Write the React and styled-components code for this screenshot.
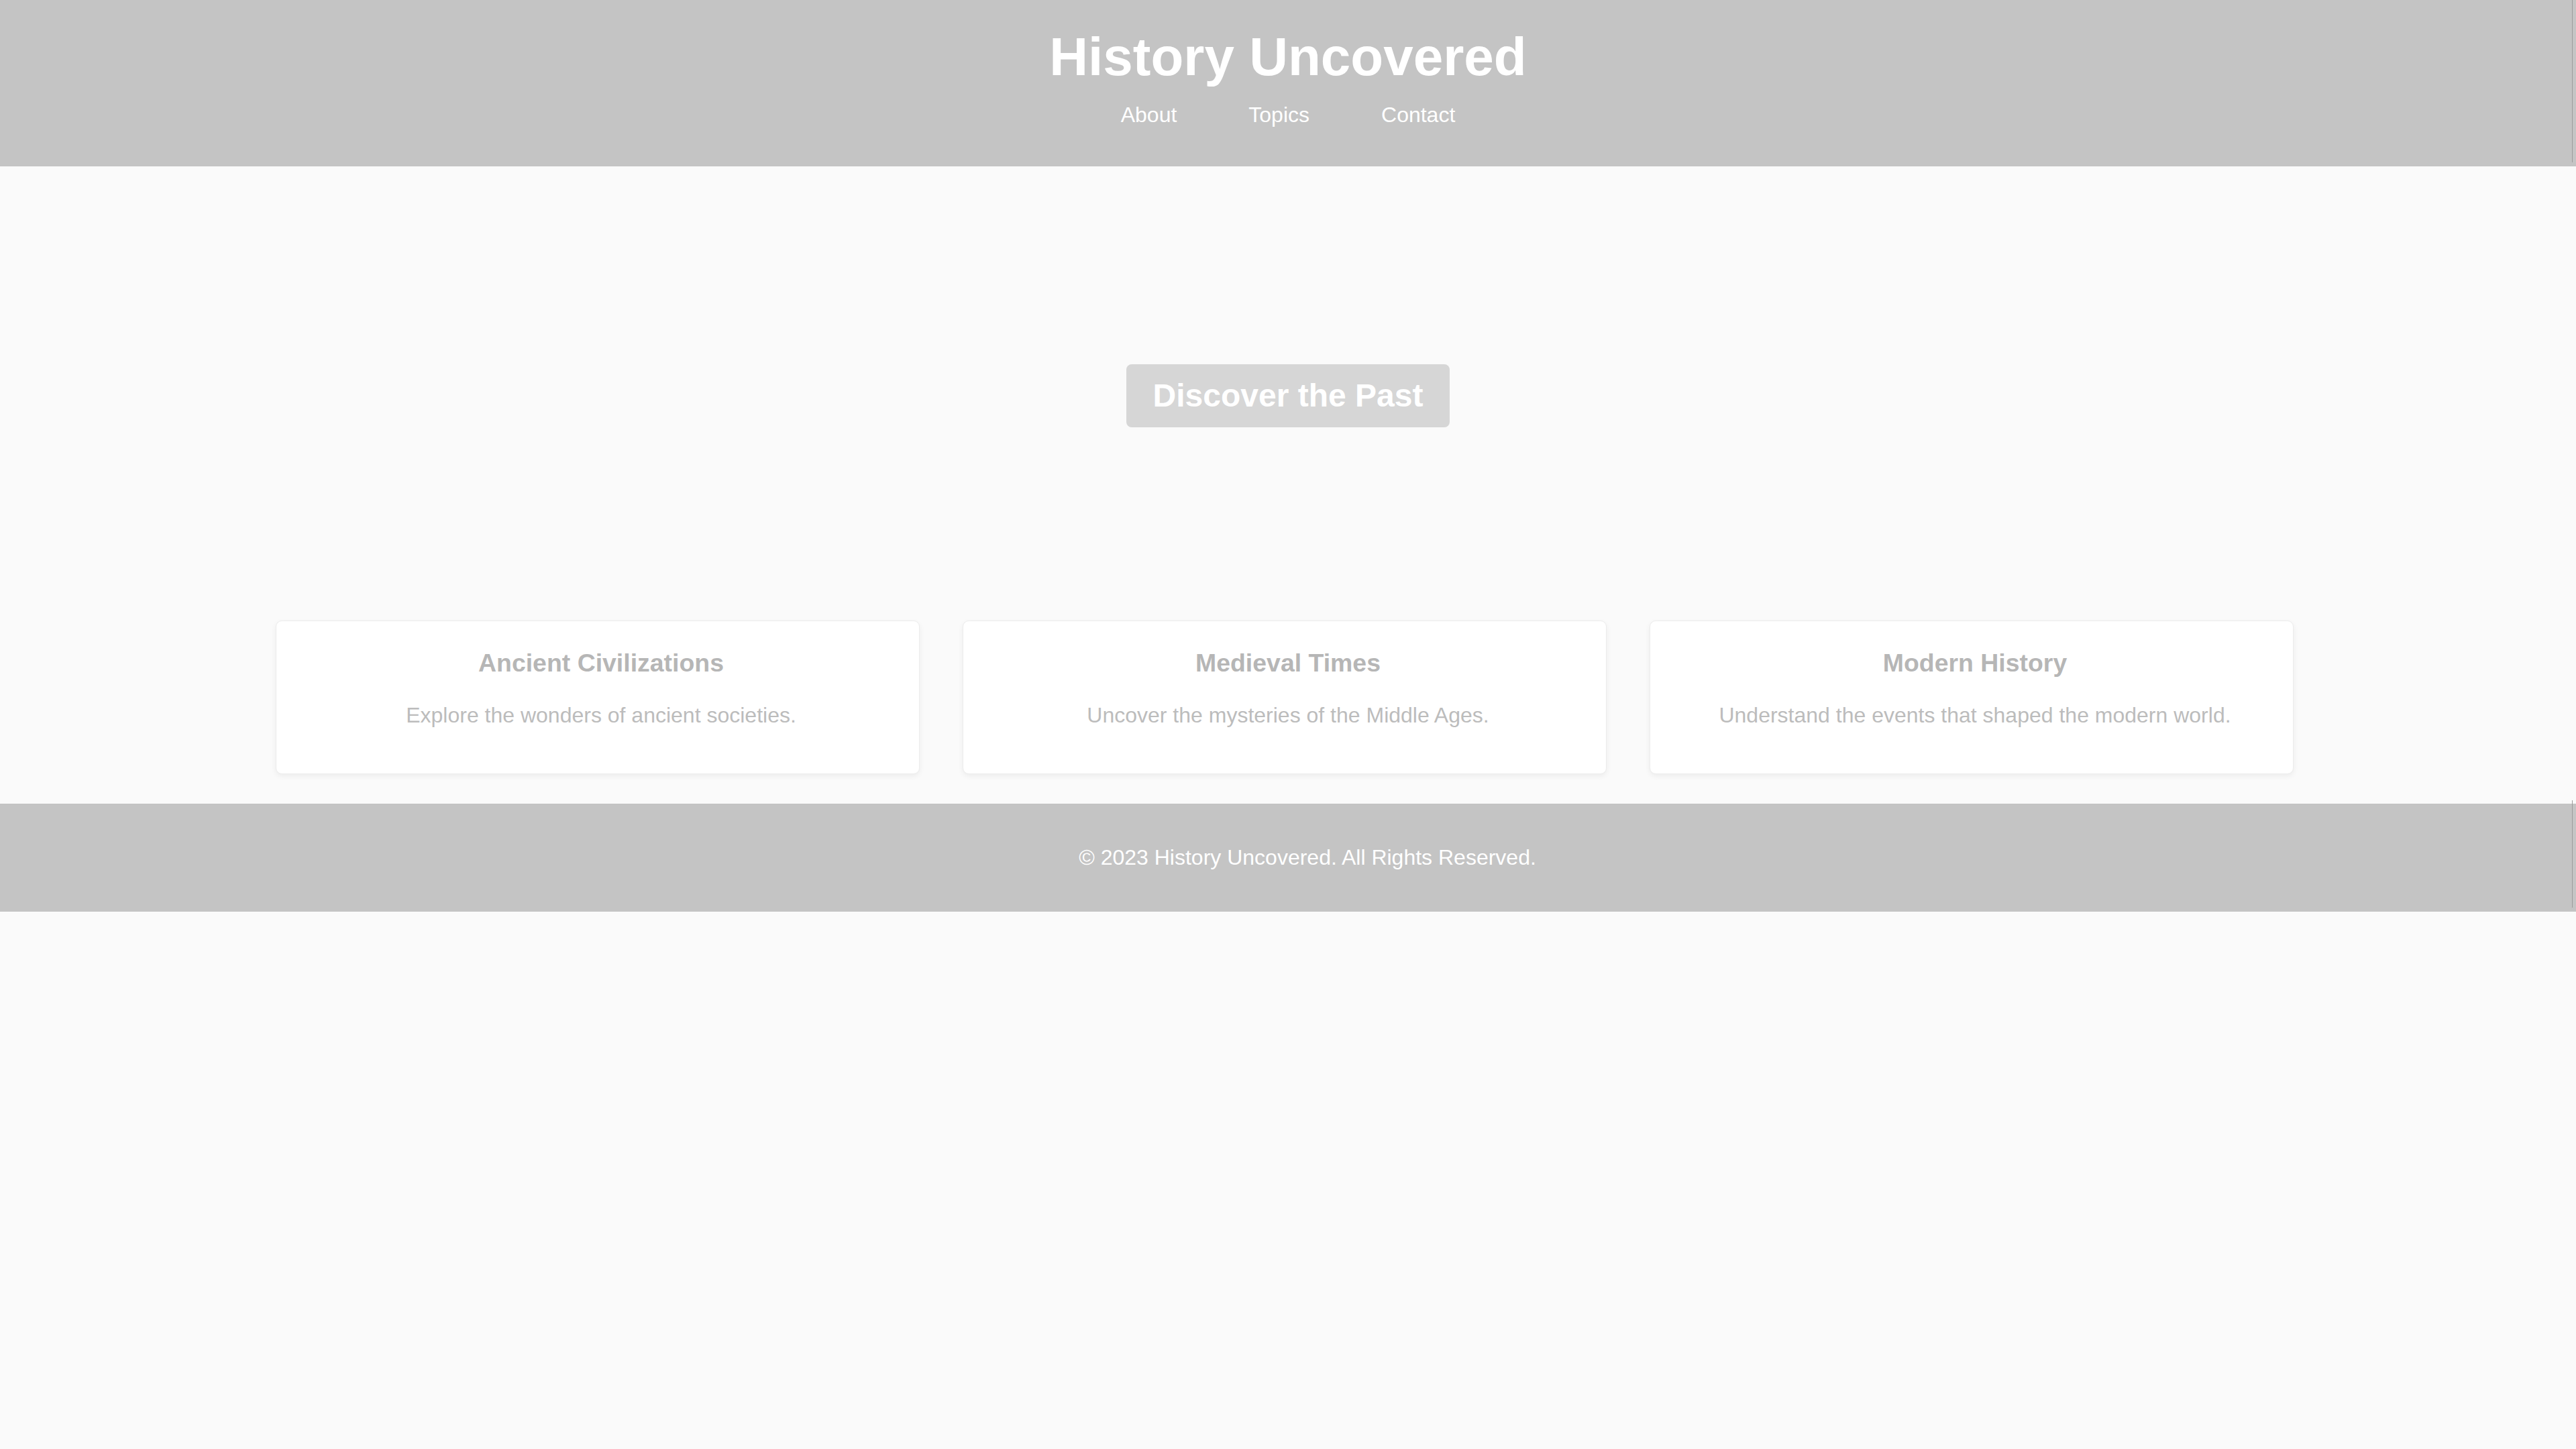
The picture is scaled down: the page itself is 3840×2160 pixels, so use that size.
import React from "react";
import styled, { createGlobalStyle } from "styled-components";

const GlobalStyle = createGlobalStyle`
  html, body {
    margin: 0;
    padding: 0;
    background: #fafafa;
    font-family: "Liberation Sans", Arial, Helvetica, sans-serif;
  }
  #root {
    min-height: 2160px;
    background: #fafafa;
  }
`;

const Page = styled.div`
  display: flex;
  flex-direction: column;
  min-height: 2160px;
  background: #fafafa;
`;

const Bar = styled.header`
  position: relative;
  background: #c4c4c4;
  color: #ffffff;
  text-align: center;
  padding: ${(p) => p.$pad};
  &::after {
    content: "";
    position: absolute;
    right: 5px;
    top: ${(p) => p.$lineTop};
    bottom: 6px;
    width: 1px;
    background: #9c9c9c;
  }
`;

const Title = styled.h1`
  margin: 0 0 22px;
  font-size: 80px;
  line-height: 92px;
  font-weight: 700;
  color: #ffffff;
`;

const Nav = styled.nav`
  display: flex;
  justify-content: center;
  gap: 107px;
`;

const NavLink = styled.a`
  font-size: 32px;
  line-height: 37px;
  color: #ffffff;
  text-decoration: none;
  cursor: pointer;
`;

const Hero = styled.section`
  display: flex;
  justify-content: center;
  align-items: center;
  padding: 295px 0 288px;
`;

const HeroButton = styled.button`
  font-family: "Liberation Sans", Arial, sans-serif;
  font-size: 48px;
  line-height: 54px;
  font-weight: 700;
  color: #ffffff;
  background: #d6d6d6;
  border: none;
  border-radius: 8px;
  padding: 20px 40px;
  cursor: pointer;
`;

const Cards = styled.section`
  display: grid;
  grid-template-columns: repeat(3, 960px);
  gap: 64px;
  justify-content: center;
  padding-right: 10px;
  margin-bottom: 44px;
`;

const Card = styled.article`
  background: #ffffff;
  border: 1px solid #ececec;
  border-radius: 9px;
  box-shadow: 0 3px 8px rgba(0, 0, 0, 0.06);
  padding: 41px 35px 68px 45px;
  text-align: center;
`;

const CardTitle = styled.h3`
  margin: 0 0 38px;
  font-size: 37.44px;
  line-height: 43px;
  font-weight: 700;
  color: #b6b6b6;
`;

const CardText = styled.p`
  margin: 0;
  font-size: 32px;
  line-height: 37px;
  color: #bcbcbc;
`;

const FooterText = styled.p`
  margin: 0;
  padding-left: 58px;
  font-size: 32px;
  line-height: 37px;
  color: #ffffff;
`;

const topics = [
  { title: "Ancient Civilizations", text: "Explore the wonders of ancient societies." },
  { title: "Medieval Times", text: "Uncover the mysteries of the Middle Ages." },
  { title: "Modern History", text: "Understand the events that shaped the modern world." },
];

export default function App() {
  return (
    <>
      <GlobalStyle />
      <Page>
        <Bar $pad="39px 0 58px" $lineTop="0px">
          <Title>History Uncovered</Title>
          <Nav>
            <NavLink>About</NavLink>
            <NavLink>Topics</NavLink>
            <NavLink>Contact</NavLink>
          </Nav>
        </Bar>
        <Hero>
          <HeroButton>Discover the Past</HeroButton>
        </Hero>
        <Cards>
          {topics.map((t) => (
            <Card key={t.title}>
              <CardTitle>{t.title}</CardTitle>
              <CardText>{t.text}</CardText>
            </Card>
          ))}
        </Cards>
        <Bar as="footer" $pad="62px 0" $lineTop="-5px">
          <FooterText>© 2023 History Uncovered. All Rights Reserved.</FooterText>
        </Bar>
      </Page>
    </>
  );
}
